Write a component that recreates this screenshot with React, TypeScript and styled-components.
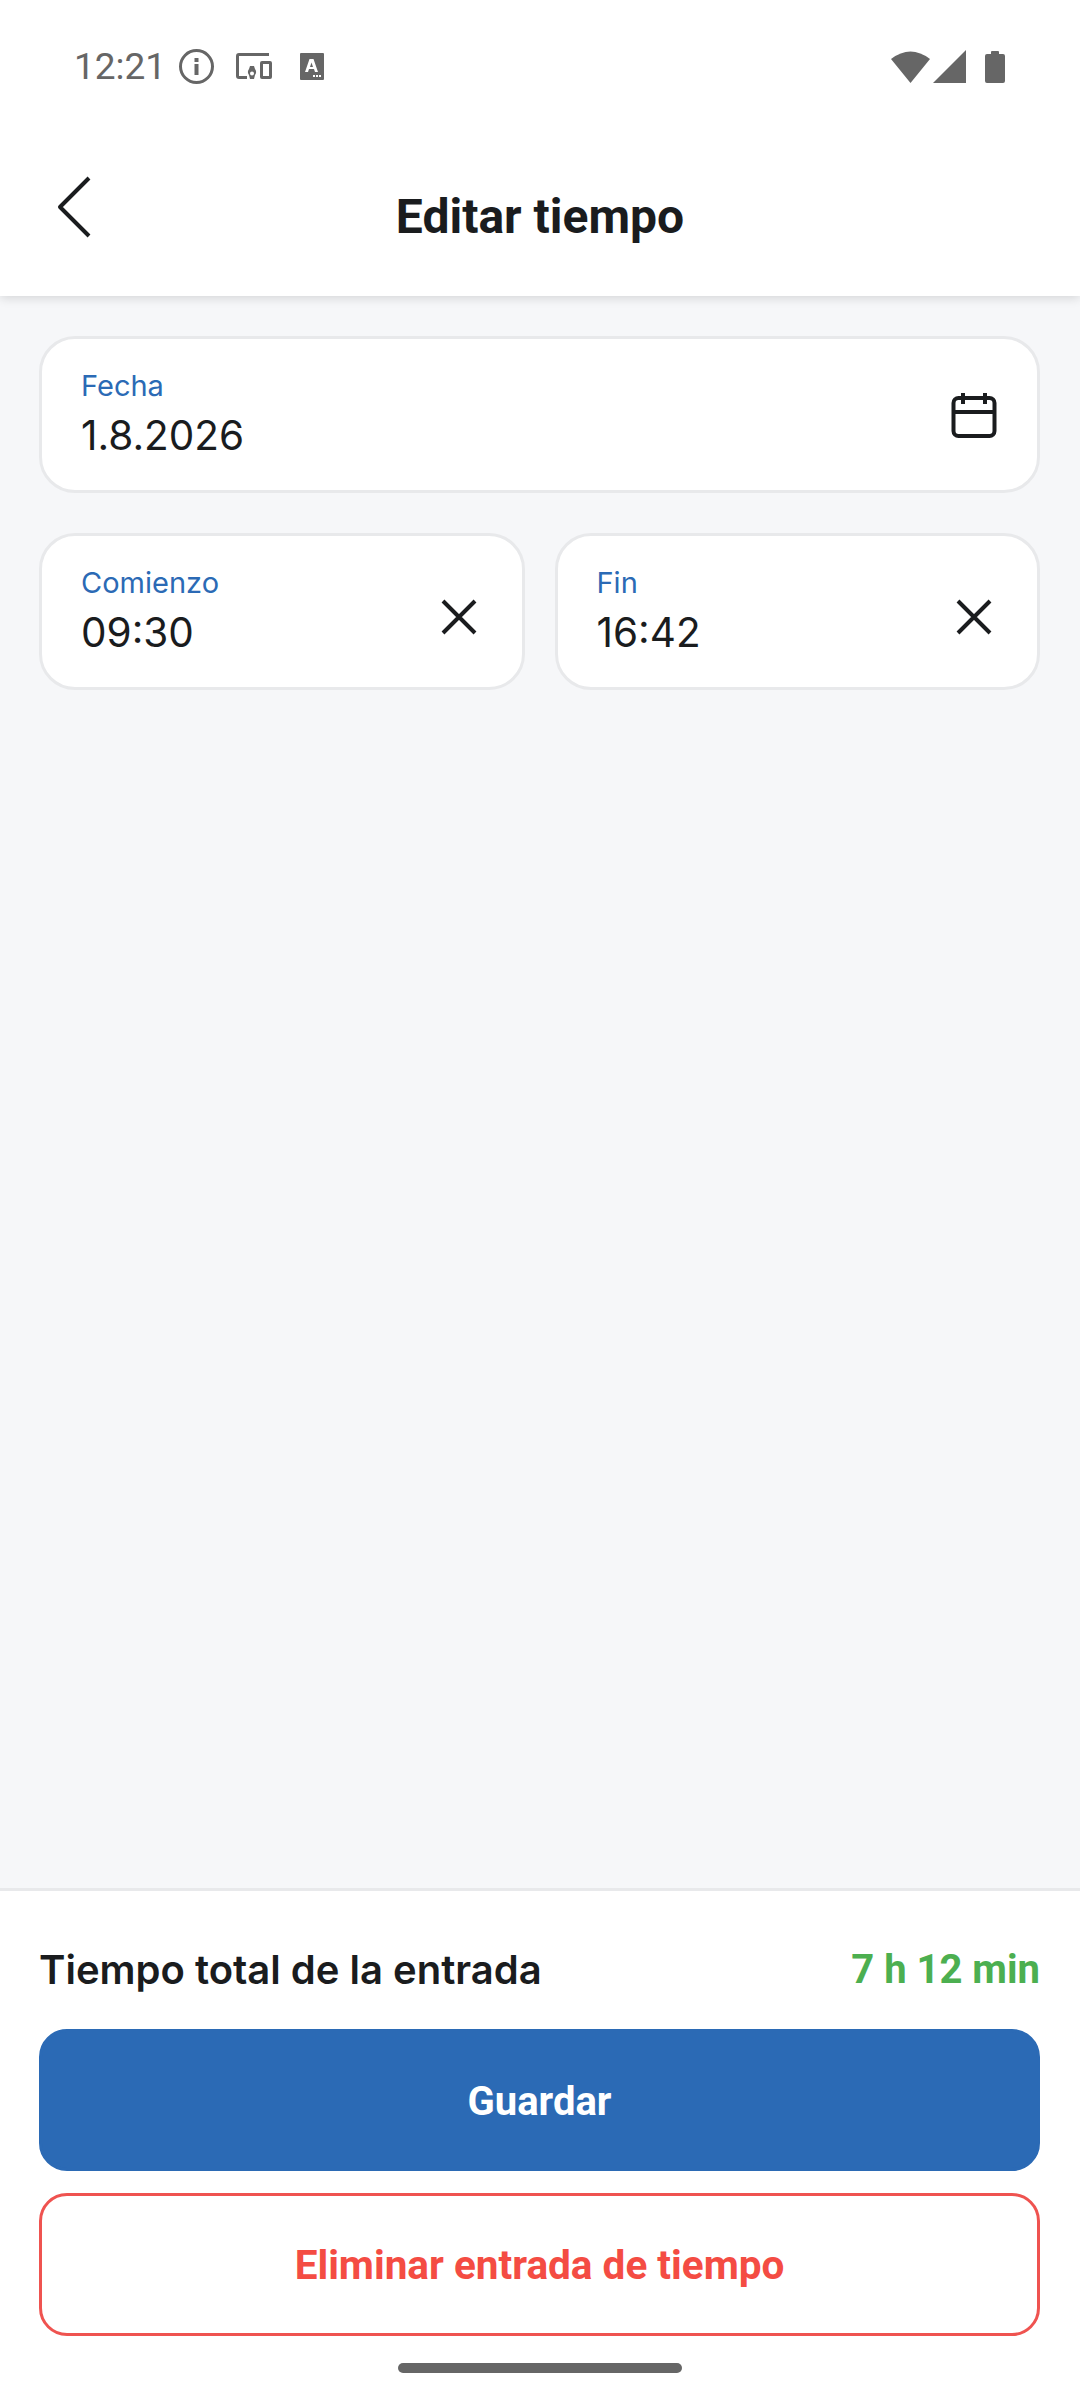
import styled, { createGlobalStyle } from 'styled-components';

const GlobalStyle = createGlobalStyle`
  html, body {
    margin: 0;
    padding: 0;
    background: #ffffff;
  }
  * {
    box-sizing: border-box;
  }
`;

const Screen = styled.div`
  width: 1080px;
  height: 2400px;
  display: flex;
  flex-direction: column;
  background: #f6f7f9;
  overflow: hidden;
`;

const TopArea = styled.header`
  background: #ffffff;
  height: 296px;
  box-shadow: 0 2px 10px rgba(0, 0, 0, 0.14);
  position: relative;
  display: flex;
  flex-direction: column;
`;

const StatusBar = styled.div`
  height: 132px;
  padding: 0 75px 0 74px;
  display: flex;
  align-items: center;
  justify-content: space-between;
`;

const StatusLeft = styled.div`
  display: flex;
  align-items: center;
`;

const StatusRight = styled.div`
  display: flex;
  align-items: center;
`;

const Clock = styled.span`
  font-family: Roboto, sans-serif;
  font-size: 37px;
  color: #666666;
  width: 105px;
`;

const StatusIcon = styled.svg<{ $gap?: number }>`
  display: block;
  fill: #666666;
  margin-right: ${(p) => p.$gap ?? 0}px;
`;

const AppBar = styled.div`
  flex: 1;
  position: relative;
  display: flex;
  align-items: center;
  justify-content: center;
  padding-top: 4px;
`;

const Title = styled.h1`
  margin: 0;
  font-family: Roboto, sans-serif;
  font-size: 48px;
  font-weight: 700;
  color: #1a1c1e;
`;

const BackButton = styled.svg`
  position: absolute;
  left: 57px;
  top: 44px;
  fill: none;
  stroke: #1a1c1e;
  stroke-width: 4;
  stroke-linejoin: round;
`;

const Content = styled.main`
  flex: 1;
  padding: 40px 40px 0 39px;
  display: flex;
  flex-direction: column;
  gap: 40px;
`;

const TimeRow = styled.div`
  display: grid;
  grid-template-columns: 1fr 1fr;
  gap: 30px;
`;

const Field = styled.div`
  height: 157px;
  background: #ffffff;
  border: 3px solid #e8e9eb;
  border-radius: 36px;
  padding: 0 40px 0 39px;
  display: flex;
  align-items: center;
  justify-content: space-between;
`;

const FieldText = styled.div`
  display: flex;
  flex-direction: column;
  padding-bottom: 1px;
`;

const FieldLabel = styled.span`
  font-family: Inter, sans-serif;
  font-size: 29px;
  line-height: 38px;
  margin-bottom: 6px;
  color: #2b6ab5;
`;

const FieldValue = styled.span`
  font-family: Inter, sans-serif;
  font-size: 40.5px;
  line-height: 50px;
  color: #1a1c1e;
`;

const FieldIcon = styled.svg`
  display: block;
  flex: none;
  fill: none;
  stroke: #1a1c1e;
  stroke-width: 4;
  stroke-linejoin: round;
`;

const ClearIcon = styled(FieldIcon)`
  margin-top: 10px;
`;

const Footer = styled.footer`
  height: 512px;
  background: #ffffff;
  border-top: 3px solid #e8e9eb;
  padding: 53px 40px 0 39px;
  display: flex;
  flex-direction: column;
`;

const TotalRow = styled.div`
  display: flex;
  align-items: center;
  justify-content: space-between;
  height: 50px;
  margin-bottom: 35px;
`;

const TotalLabel = styled.span`
  font-family: Inter, sans-serif;
  font-size: 40px;
  font-weight: 600;
  color: #1a1c1e;
`;

const TotalValue = styled.span`
  font-family: Roboto, sans-serif;
  font-size: 40px;
  font-weight: 700;
  color: #4caf50;
`;

const ActionButton = styled.button<{ $danger?: boolean }>`
  height: ${(p) => (p.$danger ? '143px' : '142px')};
  width: 100%;
  flex: none;
  border-radius: 28px;
  border: 3px solid ${(p) => (p.$danger ? '#ef5350' : '#2b6ab5')};
  background: ${(p) => (p.$danger ? '#ffffff' : '#2b6ab5')};
  color: ${(p) => (p.$danger ? '#f44c43' : '#ffffff')};
  font-family: Roboto, sans-serif;
  font-size: ${(p) => (p.$danger ? '40.5px' : '40px')};
  font-weight: 700;
  margin-bottom: ${(p) => (p.$danger ? '0' : '22px')};
  padding: ${(p) => (p.$danger ? '0' : '2px 0 0')};
`;

const HomeIndicator = styled.div`
  width: 284px;
  height: 10px;
  border-radius: 5px;
  background: #666666;
  margin: 27px auto 0;
  flex: none;
`;

const CloseIcon = () => (
  <ClearIcon width="46" height="36" viewBox="0 0 46 36">
    <path d="M7 2 L39 34 M39 2 L7 34" />
  </ClearIcon>
);

const App = () => {
  return (
    <>
      <GlobalStyle />
      <Screen>
        <TopArea>
          <StatusBar>
            <StatusLeft>
              <Clock>12:21</Clock>
              <StatusIcon $gap={22} width="35" height="35" viewBox="0 0 35 35">
                <path
                  fillRule="evenodd"
                  d="M17.5 0a17.5 17.5 0 1 0 0 35a17.5 17.5 0 0 0 0-35zM17.5 3a14.5 14.5 0 1 1 0 29a14.5 14.5 0 0 1 0-29z"
                />
                <rect x="15.5" y="15" width="4" height="11" />
                <rect x="15.5" y="9" width="4" height="4" />
              </StatusIcon>
              <StatusIcon $gap={28} width="36" height="26" viewBox="0 0 36 26">
                <path d="M0 3a3 3 0 0 1 3-3h30v3H3v20h8v3H3a3 3 0 0 1-3-3z" />
                <path
                  fillRule="evenodd"
                  d="M26 8h8a2 2 0 0 1 2 2v14a2 2 0 0 1-2 2h-8a2 2 0 0 1-2-2V10a2 2 0 0 1 2-2zm1 3v12h6V11z"
                />
                <path
                  fillRule="evenodd"
                  d="M14 13h4l1 3a5 5 0 0 1 0 6l-1 4h-4l-1-4a5 5 0 0 1 0-6zm2 5.500a2 2 0 1 0 0 4a2 2 0 0 0 0-4z"
                />
              </StatusIcon>
              <StatusIcon width="24" height="27" viewBox="0 0 24 27">
                <path
                  fillRule="evenodd"
                  d="M1 0h22a1 1 0 0 1 1 1v25a1 1 0 0 1-1 1H1a1 1 0 0 1-1-1V1a1 1 0 0 1 1-1zM9.500 6L5 19h3l1-3h5l1 3h3L13.500 6zm2 3.500L13 14H10z"
                />
                <rect x="13" y="22" width="2" height="2" fill="#ffffff" />
                <rect x="16" y="22" width="2" height="2" fill="#ffffff" />
                <rect x="19" y="22" width="2" height="2" fill="#ffffff" />
              </StatusIcon>
            </StatusLeft>
            <StatusRight>
              <StatusIcon $gap={3} width="39" height="33" viewBox="0 0 39 33">
                <path d="M0 9Q19.500-6 39 9L19.500 33z" />
              </StatusIcon>
              <StatusIcon $gap={19} width="33" height="33" viewBox="0 0 33 33">
                <path d="M33 0V33H0z" />
              </StatusIcon>
              <StatusIcon width="20" height="33" viewBox="0 0 20 33">
                <path d="M6 2a1 1 0 0 1 1-1h6a1 1 0 0 1 1 1v2h4a2 2 0 0 1 2 2v25a2 2 0 0 1-2 2H2a2 2 0 0 1-2-2V6a2 2 0 0 1 2-2h4z" />
              </StatusIcon>
            </StatusRight>
          </StatusBar>
          <AppBar>
            <BackButton width="34" height="64" viewBox="0 0 34 64">
              <path d="M32 2 L3 31 L32 60" />
            </BackButton>
            <Title>Editar tiempo</Title>
          </AppBar>
        </TopArea>
        <Content>
          <Field>
            <FieldText>
              <FieldLabel>Fecha</FieldLabel>
              <FieldValue>1.8.2026</FieldValue>
            </FieldText>
            <FieldIcon width="46" height="46" viewBox="0 0 46 46">
              <rect x="2.500" y="6" width="41" height="38" rx="5" />
              <path d="M2.500 20H43.500M12 1V12M34 1V12" />
            </FieldIcon>
          </Field>
          <TimeRow>
            <Field>
              <FieldText>
                <FieldLabel>Comienzo</FieldLabel>
                <FieldValue>09:30</FieldValue>
              </FieldText>
              <CloseIcon />
            </Field>
            <Field>
              <FieldText>
                <FieldLabel>Fin</FieldLabel>
                <FieldValue>16:42</FieldValue>
              </FieldText>
              <CloseIcon />
            </Field>
          </TimeRow>
        </Content>
        <Footer>
          <TotalRow>
            <TotalLabel>Tiempo total de la entrada</TotalLabel>
            <TotalValue>7 h 12 min</TotalValue>
          </TotalRow>
          <ActionButton>Guardar</ActionButton>
          <ActionButton $danger>Eliminar entrada de tiempo</ActionButton>
          <HomeIndicator />
        </Footer>
      </Screen>
    </>
  );
};

export default App;
